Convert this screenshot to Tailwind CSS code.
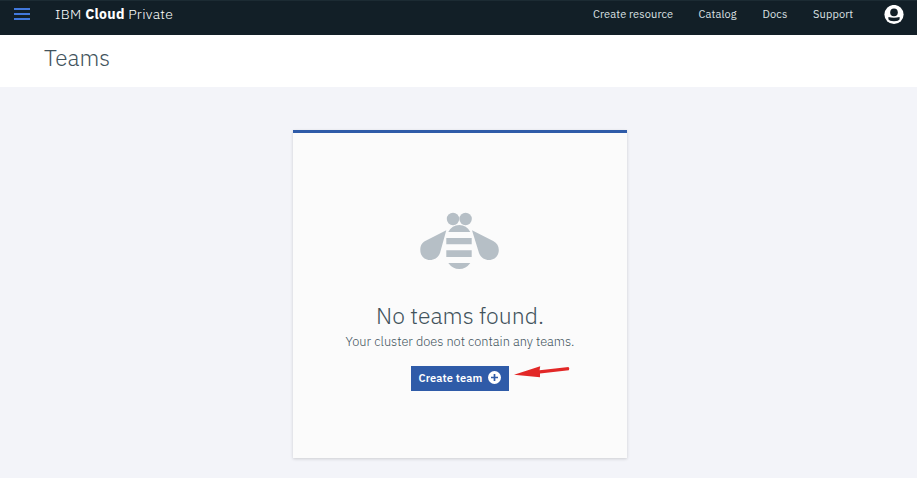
<!DOCTYPE html>
<html lang="en">
<head>
<meta charset="utf-8">
<title>Teams</title>
<script src="https://cdn.jsdelivr.net/npm/@tailwindcss/browser@4"></script>
</head>
<body class="flex h-screen flex-col overflow-hidden bg-[#f3f4f9] font-['IBM_Plex_Sans',Roboto,sans-serif] text-[#42535c] antialiased">
<header class="flex h-[35px] shrink-0 items-start border-t border-[#1c2b33] bg-[#121f27] pr-[13px] pl-[14px] text-white">
  <button aria-label="Menu" class="mt-[7px] flex w-4 flex-col gap-[3px]"><span class="h-0.5 bg-[#4178dc]"></span><span class="h-0.5 bg-[#4178dc]"></span><span class="h-0.5 bg-[#4178dc]"></span></button>
  <div class="mt-[3px] ml-[25px] text-[14px] leading-5 font-light tracking-[0.29px] whitespace-nowrap">IBM <b class="font-bold">Cloud</b> Private</div>
  <nav class="mt-[5px] ml-auto flex text-[11px] leading-4 tracking-[0.12px] whitespace-nowrap text-[#dce1e4]">
    <a class="w-[105.5px]">Create resource</a><a class="w-16">Catalog</a><a class="w-[50.5px]">Docs</a><a class="w-[71px]">Support</a>
  </nav>
  <svg class="mt-1 h-5 w-5" viewBox="0 0 20 20"><circle cx="10" cy="9.5" r="9.6" fill="#fff"/><circle cx="10" cy="7.4" r="3.8" fill="#121f27"/><path d="M4.4 12.1Q10 13.3 15.6 12.1V14.3Q14.8 16.2 10 16.2T4.4 14.3Z" fill="#121f27"/></svg>
</header>
<div class="h-[52px] shrink-0 bg-white pt-2 pl-11"><h1 class="text-[22.6px] leading-[29px] font-light">Teams</h1></div>
<main class="flex justify-center pt-[43px] pl-[3px]">
  <section class="flex h-[328px] w-[334px] flex-col items-center border-t-[3px] border-[#2f5ba8] bg-[#fbfbfb] pt-[79px] shadow-[0_1px_3px_rgba(0,0,0,0.16)]">
    <svg class="h-[58px] w-20 shrink-0" viewBox="0 0 80 58" fill="#b6bfc6"><circle cx="33" cy="7" r="6.2"/><circle cx="45.6" cy="7" r="6.2"/><path d="M28.3 20Q32 13 39.3 13T50.3 20ZM26.3 26H51.7V32.3H26.3ZM26.3 38.3H51.7V45H26.3ZM28.3 51H50.3Q46 57 39.3 57T28.3 51ZM26.3 18.3L5.2 29C1.5 31 .3 34.3.3 38C.3 44 4.5 48 10 48C14.5 48 18.5 45.5 20 41ZM52 18.3L73.2 29C77 31 78.8 34.3 78.8 38C78.8 44 74.5 48 69 48C64.5 48 60.5 45.5 59 41Z"/></svg>
    <h2 class="mt-[30px] text-[23px] leading-[30px] font-light whitespace-nowrap">No teams found.</h2>
    <p class="mt-1 text-[12.8px] leading-4 font-light whitespace-nowrap">Your cluster does not contain any teams.</p>
    <div class="relative mt-4 mr-[1px]">
      <button class="flex h-[25px] w-[98px] items-center justify-between bg-[#2f5ba8] pr-2 pl-2 text-[11px] font-semibold whitespace-nowrap text-white"><span class="tracking-[0.12px]">Create team</span><svg class="mb-0.5 h-[13px] w-[13px]" viewBox="0 0 13 13"><circle cx="6.5" cy="6.5" r="6.5" fill="#fff"/><path d="M6.5 3V10M3 6.5H10" stroke="#2f5ba8" stroke-width="1.7"/></svg></button>
      <svg class="absolute top-0 left-[103px] h-3 w-14" viewBox="0 0 56 12"><path d="M0 8.7L26.2.3L25.6 4.2L54.5 1Q56 2.2 54.8 4.2L26 7.4V11.3Z" fill="#e22827"/></svg>
    </div>
  </section>
</main>
</body>
</html>
